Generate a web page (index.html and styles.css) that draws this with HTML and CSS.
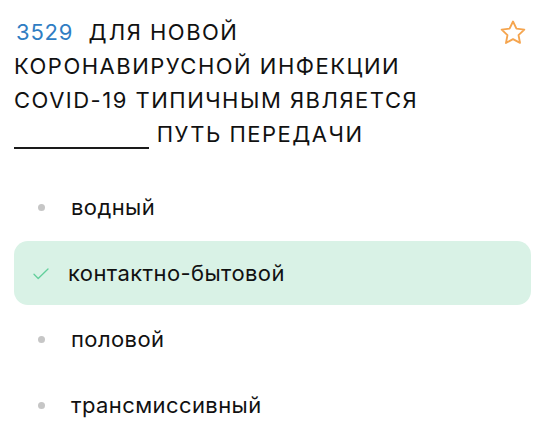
FILE: index.html
```html
<!DOCTYPE html>
<html lang="ru">
<head>
<meta charset="utf-8">
<link rel="stylesheet" href="styles.css">
</head>
<body>
<div class="card">
  <div class="head">
    <p class="question"><span class="num">3529</span>&nbsp; ДЛЯ НОВОЙ КОРОНАВИРУСНОЙ ИНФЕКЦИИ COVID-19 ТИПИЧНЫМ ЯВЛЯЕТСЯ <span class="blank"></span> ПУТЬ ПЕРЕДАЧИ</p>
    <svg class="star" viewBox="0 0 24 24" width="30" height="30"><path d="M12 2.8l2.75 5.75 6.3.78-4.62 4.36 1.17 6.25L12 16.87l-5.6 3.07 1.17-6.25L2.95 9.33l6.3-.78z" fill="none" stroke="#f5a54f" stroke-width="1.5" stroke-linejoin="round"/></svg>
  </div>
  <ul class="answers">
    <li class="answer"><span class="mark"><span class="dot"></span></span>водный</li>
    <li class="answer correct"><span class="mark"><svg class="check" viewBox="0 0 16 12" width="16" height="12"><path d="M1 6.2l4.2 4.3L15 1" fill="none" stroke="#62cf9b" stroke-width="1.3" stroke-linecap="round" stroke-linejoin="round"/></svg></span>контактно-бытовой</li>
    <li class="answer"><span class="mark"><span class="dot"></span></span>половой</li>
    <li class="answer"><span class="mark"><span class="dot"></span></span>трансмиссивный</li>
  </ul>
</div>
</body>
</html>
```

FILE: styles.css
```css
* { box-sizing: border-box; }
html, body { margin: 0; padding: 0; background: #ffffff; }
body { font-family: Inter, "Noto Sans", sans-serif; color: #111111; }
.card { padding: 15px 8px 0 14px; }
.head { display: flex; align-items: flex-start; justify-content: space-between; }
.question {
  margin: 0;
  font-size: 22px;
  line-height: 34px;
  width: 440px;
  letter-spacing: 1.5px;
}
.num { color: #2f7dc3; letter-spacing: 0.8px; margin-left: 2px; }
.blank {
  display: inline-block;
  width: 135px;
  height: 2px;
  background: #1a1a1a;
  vertical-align: -7px;
}
.star { margin-top: 3px; margin-right: 2px; }
.answers {
  list-style: none;
  margin: 24px 0 0 0;
  padding: 0;
  display: flex;
  flex-direction: column;
  gap: 2px;
}
.answer {
  height: 64px;
  display: flex;
  align-items: center;
  font-size: 22px;
  letter-spacing: 0.4px;
  border-radius: 14px;
  padding-left: 18px;
  width: 517px;
}
.mark {
  width: 39px;
  display: flex;
  align-items: center;
  padding-left: 2px;
}
.dot {
  width: 7px;
  height: 7px;
  border-radius: 50%;
  background: #c6c6c6;
  margin-left: 4px;
}
.correct { background: #d9f2e6; }
.correct .mark { width: 36px; padding-left: 1px; }
.check { margin-top: 1px; }
```
